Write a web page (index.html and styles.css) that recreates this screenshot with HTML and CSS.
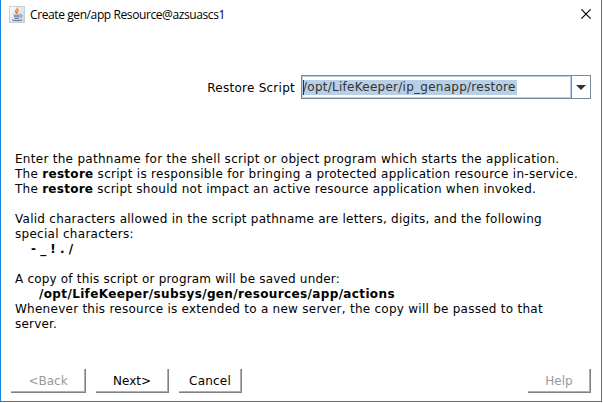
FILE: index.html
```
<!DOCTYPE html>
<html lang="en">
<head>
<meta charset="utf-8">
<title>Create gen/app Resource@azsuascs1</title>
<link rel="stylesheet" href="styles.css">
</head>
<body>
<main class="dialog">
  <header class="titlebar">
    <svg class="java" width="16" height="17" viewBox="0 0 16 17">
      <defs><linearGradient id="tile" x2="1" y2="1"><stop offset="0" stop-color="#fff"/><stop offset="1" stop-color="#c9ced5"/></linearGradient></defs>
      <rect x=".5" y=".5" width="15" height="16" fill="url(#tile)" stroke="#c9ced5"/>
      <path d="M8.500 1.500c1 2-3.500 3-1.500 5l1 1.500M10 4c-2 1-2.500 2-1.300 3.500" fill="none" stroke="#e8762c" stroke-width="1.200"/>
      <path d="M4.500 8.800c1 .7 5 .7 6.500 0M5 10.800h5.500M5.500 12.600h4.500M11.300 8.900c2.300-.4 2 1.700-.2 2.400M3 13.800c2 1.200 8 1.200 10 0" fill="none" stroke="#557794"/>
    </svg>
    <h1 class="title">Create gen/app Resource@azsuascs1</h1>
    <svg class="close" width="10" height="10" viewBox="0 0 10 10"><path d="M.4.4l9.200 9.200M9.600.4L.4 9.600" stroke="#000" stroke-width="1.200"/></svg>
  </header>
  <section class="field">
    <label class="label">Restore Script</label>
    <div class="combo">
      <div class="input"><span class="selected">/opt/LifeKeeper/ip_genapp/restore</span></div>
      <div class="arrow"><svg width="10" height="5" viewBox="0 0 10 5"><path d="M0 0h10L5 5z" fill="#333"/></svg></div>
    </div>
  </section>
  <section class="help">
    <p>Enter the pathname for the shell script or object program which starts the application.</p>
    <p>The <b>restore</b> script is responsible for bringing a protected application resource in-service.</p>
    <p class="snug">The <b>restore</b> script should not impact an active resource application when invoked.</p>
    <p class="gap snug">Valid characters allowed in the script pathname are letters, digits, and the following</p>
    <p>special characters:</p>
    <p class="chars"><b>- _ ! . /</b></p>
    <p class="gap tight">A copy of this script or program will be saved under:</p>
    <p class="path"><b>/opt/LifeKeeper/subsys/gen/resources/app/actions</b></p>
    <p class="snug">Whenever this resource is extended to a new server, the copy will be passed to that</p>
    <p class="tight">server.</p>
  </section>
  <footer class="buttons">
    <button class="btn back" disabled>&lt;Back</button>
    <button class="btn next">Next&gt;</button>
    <button class="btn cancel">Cancel</button>
    <button class="btn helpbtn" disabled>Help</button>
  </footer>
</main>
</body>
</html>
```
FILE: styles.css
```
* { box-sizing: border-box; }
body { margin: 0; background: #fff; color: #000; font: 12px/15px "DejaVu Sans", sans-serif; overflow: hidden; }
.dialog { width: 602px; height: 402px; border: 1px solid #1c80d4; border-top-width: 0; padding-top: 1px; display: flex; flex-direction: column; }
.titlebar { height: 27px; display: flex; align-items: center; padding: 0 10px 0 8px; }
.close { margin-top: -2px; }
.title { margin: 0 auto 0 5px; font: 12px/16px "Open Sans", sans-serif; letter-spacing: -.4px; white-space: nowrap; }
.field { display: flex; align-items: center; justify-content: flex-end; gap: 6px; height: 24px; margin: 47px 10px 0 0; letter-spacing: .26px; }
.label { padding-top: 2px; }
.combo { width: 290px; height: 24px; border: 1px solid #7a8a99; display: flex; }
.input { flex: 1; border: 1px solid #b8cfe5; padding: 3px 0 0; color: #333; }
.selected { display: block; width: 214px; height: 15px; background: #b8cfe5; border-left: 1px solid #333; text-indent: -1px; white-space: nowrap; }
.arrow { width: 19px; border-left: 1px solid #7a8a99; display: flex; align-items: center; justify-content: center; }
.help { margin: 53px 0 0 14px; letter-spacing: .285px; white-space: nowrap; }
.help p { margin: 0; height: 15px; }
.help .gap { margin-top: 15px; }
.help .snug { letter-spacing: .257px; }
.help .tight { letter-spacing: .19px; }
.help .chars { padding-left: 16px; letter-spacing: 0; }
.help .path { padding-left: 24px; letter-spacing: .36px; }
.buttons { display: flex; margin: auto 10px 8px 10px; }
.btn { height: 24px; padding: 2px 0 0; margin: 0 10px 0 0; background: #fff; color: #000; font: inherit; border: 0 solid #808080; border-width: 0 1px 1px 0; box-shadow: inset -1px -1px #b0b0b0; }
.btn:disabled { color: #999; }
.back { width: 75px; }
.next { width: 73px; }
.cancel { width: 63px; letter-spacing: .2px; }
.helpbtn { width: 63px; margin: 0 0 0 auto; }
```
